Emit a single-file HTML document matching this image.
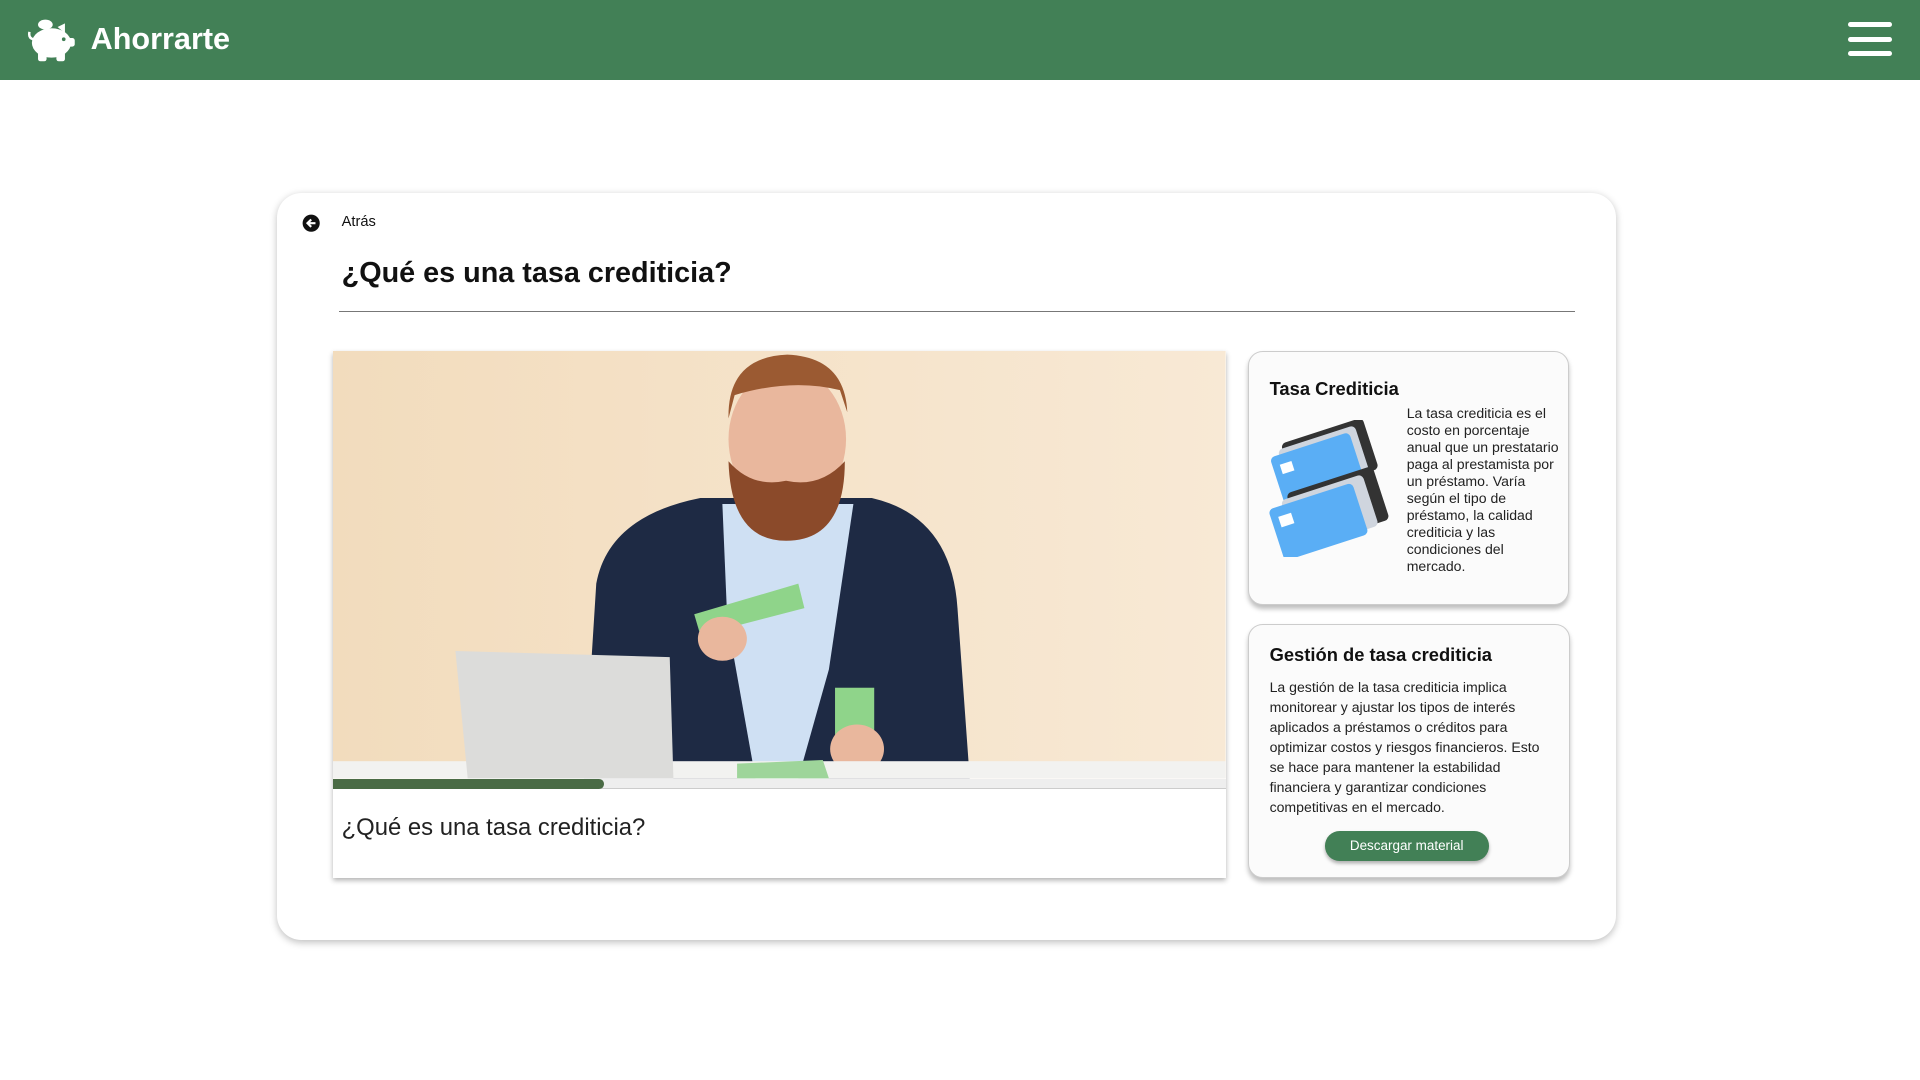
<!DOCTYPE html>
<html><head><meta charset="utf-8"><style>
*{box-sizing:border-box;margin:0;padding:0}
html,body{width:1920px;height:1080px;overflow:hidden;background:#fff}
#w{width:1568px;height:882px;zoom:1.22449;position:relative;font-family:"Liberation Sans",sans-serif;color:#111}
.hd{position:absolute;left:0;top:0;width:1568px;height:65px;background:#428056}
.logo{position:absolute;left:74px;top:18px;color:#fff;font-size:25px;font-weight:bold}
.bar{position:absolute;left:1509px;width:36px;height:4px;border-radius:2px;background:#fff}
.card{position:absolute;left:226px;top:158px;width:1094px;height:610px;border-radius:20px;background:#fff;box-shadow:0 2px 6px rgba(0,0,0,.25)}
.abs{position:absolute}
.rc{position:absolute;background:#fbfbfb;border:1px solid #ccc;border-radius:12px;box-shadow:0 3px 4px rgba(0,0,0,.25)}
</style></head><body><div id="w">
<div class="hd">
<svg class="abs" style="left:22px;top:13px" width="40" height="38" viewBox="0 0 40 38"><ellipse cx="20" cy="22" rx="16" ry="12" fill="#fff"/><ellipse cx="15" cy="7" rx="6" ry="4" fill="#fff"/><path d="M25 9 L31 6 L31 14Z" fill="#fff"/><rect x="33" y="18" width="6" height="7" rx="2" fill="#fff"/><rect x="9" y="29" width="7" height="8" rx="2" fill="#fff"/><rect x="24" y="29" width="7" height="8" rx="2" fill="#fff"/><path d="M5 19 Q1 18 2 13" stroke="#fff" stroke-width="2" fill="none"/><circle cx="30" cy="19" r="1.5" fill="#428056"/></svg>
<div class="logo">Ahorrarte</div>
<div class="bar" style="top:18px"></div><div class="bar" style="top:30px"></div><div class="bar" style="top:42px"></div>
</div>
<div class="card"></div>
<svg class="abs" style="left:247px;top:175px" width="15" height="15" viewBox="0 0 15 15"><circle cx="7.5" cy="7.5" r="7" fill="#111"/><path d="M11 7.5H4.5M7.5 4.5L4.5 7.5L7.5 10.5" stroke="#fff" stroke-width="1.8" fill="none"/></svg>
<div class="abs" style="left:279px;top:175px;font-size:12px">Atrás</div>
<div class="abs" style="left:279px;top:210px;font-size:23.5px;font-weight:bold">¿Qué es una tasa crediticia?</div>
<div class="abs" style="left:277px;top:254px;width:1009px;height:1px;background:#777"></div>
<div class="abs" style="left:272px;top:287px;width:729px;height:430px;background:#fff;box-shadow:0 2px 4px rgba(0,0,0,.3);overflow:hidden">
<svg width="729" height="349" viewBox="0 0 729 349" style="display:block">
<defs><linearGradient id="bg" x1="0" x2="1"><stop offset="0" stop-color="#f2dcbd"/><stop offset="1" stop-color="#f8e9d5"/></linearGradient></defs>
<rect width="729" height="349" fill="url(#bg)"/>
<path d="M205 349 L215 190 Q225 135 300 120 L440 120 Q505 135 510 210 L520 349Z" fill="#1e2a44"/>
<path d="M318 125 L425 125 L405 260 L380 349 L345 349 L322 220Z" fill="#cfe0f3"/>
<ellipse cx="371" cy="72" rx="48" ry="58" fill="#e9b79d"/>
<path d="M323 55 Q322 5 371 3 Q418 5 420 50 L414 32 Q375 22 328 36Z" fill="#9b5a32"/>
<path d="M323 90 Q325 155 370 155 Q418 155 418 90 Q398 112 370 106 Q342 112 323 90Z" fill="#8b4a2a"/>
<path d="M295 215 L380 190 L385 210 L300 232Z" fill="#8fd48a"/>
<ellipse cx="318" cy="235" rx="20" ry="18" fill="#e9b79d"/>
<rect x="410" y="275" width="32" height="60" fill="#8fd48a"/>
<ellipse cx="428" cy="325" rx="22" ry="20" fill="#e9b79d"/>
<rect x="0" y="335" width="729" height="14" fill="#f2f2f0"/>
<path d="M100 245 L275 250 L278 349 L110 349Z" fill="#dcdcda"/>
<path d="M330 337 L400 334 L405 349 L330 349Z" fill="#9ed59a"/>
</svg>
<div class="abs" style="left:0;top:349px;width:729px;height:8px;background:#eee;border-bottom:1px solid #ccc"></div>
<div class="abs" style="left:0;top:349px;width:221px;height:8px;background:#4a6b45;border-radius:0 4px 4px 0"></div>
<div class="abs" style="left:7px;top:378px;font-size:19.5px;color:#222">¿Qué es una tasa crediticia?</div>
</div>
<div class="rc" style="left:1019px;top:287px;width:262px;height:207px">
<div class="abs" style="left:17px;top:21px;font-size:15px;font-weight:bold">Tasa Crediticia</div>
<svg class="abs" style="left:11px;top:55px" width="112" height="112" viewBox="0 0 112 112"><g transform="rotate(-18 55 35)"><rect x="22" y="8" width="70" height="44" rx="4" fill="#333"/><rect x="18" y="12" width="66" height="42" rx="4" fill="#cfd5de"/><rect x="10" y="16" width="68" height="42" rx="4" fill="#5aaef5"/><rect x="16" y="24" width="10" height="8" fill="#fff"/></g><g transform="rotate(-18 55 75)"><rect x="26" y="50" width="74" height="46" rx="4" fill="#333"/><rect x="20" y="54" width="70" height="44" rx="4" fill="#cfd5de"/><rect x="8" y="58" width="72" height="44" rx="4" fill="#5aaef5"/><rect x="14" y="66" width="11" height="9" fill="#fff"/></g></svg>
<div class="abs" style="left:129px;top:43px;width:124px;font-size:11.5px;line-height:13.9px;color:#222">La tasa crediticia es el costo en porcentaje anual que un prestatario paga al prestamista por un préstamo. Varía según el tipo de préstamo, la calidad crediticia y las condiciones del mercado.</div>
</div>
<div class="rc" style="left:1019px;top:510px;width:263px;height:207px">
<div class="abs" style="left:17px;top:15px;font-size:15px;font-weight:bold">Gestión de tasa crediticia</div>
<div class="abs" style="left:17px;top:42px;width:232px;font-size:11.5px;line-height:16.4px;color:#222">La gestión de la tasa crediticia implica monitorear y ajustar los tipos de interés aplicados a préstamos o créditos para optimizar costos y riesgos financieros. Esto se hace para mantener la estabilidad financiera y garantizar condiciones competitivas en el mercado.</div>
<div class="abs" style="left:62px;top:168px;width:134px;height:24px;border-radius:12px;background:#428056;color:#fff;font-size:11px;text-align:center;line-height:24px;box-shadow:0 2px 3px rgba(0,0,0,.3)">Descargar material</div>
</div>
</div></body></html>
